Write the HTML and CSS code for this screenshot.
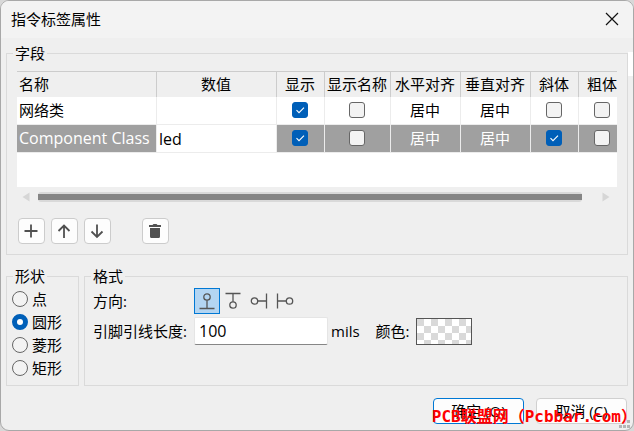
FILE: index.html
```html
<!DOCTYPE html>
<html lang="zh-CN">
<head>
  <meta charset="UTF-8" />
  <meta name="viewport" content="width=device-width, initial-scale=1" />
  <title>指令标签属性</title>
  <link rel="stylesheet" href="styles.css">
</head>
<body>

<div class="dialog">
  <header class="titlebar">
    <h1>指令标签属性</h1>
    <button class="close" aria-label="关闭">
      <svg width="14" height="14" viewBox="0 0 14 14"><path d="M1 1l12 12M13 1L1 13" stroke="#111" stroke-width="1.2" fill="none"/></svg>
    </button>
  </header>

  <main class="content">
    <fieldset class="fields">
      <legend>字段</legend>
      <div class="grid-view">
        <table>
          <colgroup>
            <col class="c-name"><col class="c-value"><col class="c-check"><col class="c-show">
            <col class="c-align"><col class="c-align"><col class="c-check"><col class="c-check">
          </colgroup>
          <thead>
            <tr>
              <th class="left">名称</th><th>数值</th><th>显示</th><th>显示名称</th>
              <th>水平对齐</th><th>垂直对齐</th><th>斜体</th><th>粗体</th>
            </tr>
          </thead>
          <tbody>
            <tr>
              <td class="left">网络类</td>
              <td></td>
              <td><input type="checkbox" aria-label="显示" checked></td>
              <td><input type="checkbox" aria-label="显示名称"></td>
              <td>居中</td>
              <td>居中</td>
              <td><input type="checkbox" aria-label="斜体"></td>
              <td><input type="checkbox" aria-label="粗体"></td>
            </tr>
            <tr class="selected">
              <td class="left latin">Component Class</td>
              <td class="edit"><input type="text" class="cell-input" aria-label="数值" value="led"></td>
              <td><input type="checkbox" aria-label="显示" checked></td>
              <td><input type="checkbox" aria-label="显示名称"></td>
              <td>居中</td>
              <td>居中</td>
              <td><input type="checkbox" aria-label="斜体" checked></td>
              <td><input type="checkbox" aria-label="粗体"></td>
            </tr>
          </tbody>
        </table>
      </div>
      <div class="scrollbar">
        <svg width="8" height="10" viewBox="0 0 8 10"><path d="M7.5 .5v9L.5 5z" fill="#d6d6d6"/></svg>
        <div class="track"><div class="thumb"></div></div>
        <svg width="8" height="10" viewBox="0 0 8 10"><path d="M.5 .5v9l7-4.5z" fill="#d6d6d6"/></svg>
      </div>
      <div class="tools">
        <button class="tool" aria-label="添加">
          <svg width="15" height="15" viewBox="0 0 15 15"><path d="M7 0.5v13M0.5 7h13" stroke="#505050" stroke-width="1.8" fill="none"/></svg>
        </button>
        <button class="tool" aria-label="上移">
          <svg width="15" height="15" viewBox="0 0 15 15"><path d="M7 14V1.500M1.500 7L7 1.500l5.500 5.500" stroke="#505050" stroke-width="1.8" fill="none"/></svg>
        </button>
        <button class="tool" aria-label="下移">
          <svg width="15" height="15" viewBox="0 0 15 15"><path d="M7 0.500V13M1.500 7.500L7 13l5.500-5.500" stroke="#505050" stroke-width="1.8" fill="none"/></svg>
        </button>
        <button class="tool delete" aria-label="删除">
          <svg width="15" height="15" viewBox="0 0 15 15"><path d="M1 1h3.500l1-1h3l1 1H13v2H1zM2 4h10v8.500a1.500 1.500 0 0 1-1.500 1.500h-7A1.500 1.500 0 0 1 2 12.500z" fill="#505050"/></svg>
        </button>
      </div>
    </fieldset>

    <div class="lower">
      <fieldset class="shapes">
        <legend>形状</legend>
        <label><input type="radio" name="shape">点</label>
        <label><input type="radio" name="shape" checked>圆形</label>
        <label><input type="radio" name="shape">菱形</label>
        <label><input type="radio" name="shape">矩形</label>
      </fieldset>

      <fieldset class="format">
        <legend>格式</legend>
        <div class="row">
          <span class="caption">方向:</span>
          <div class="directions">
            <button class="dir" aria-label="向上" aria-pressed="true">
              <svg width="18" height="18" viewBox="0 0 18 18"><circle cx="9" cy="5" r="3.2"/><path d="M9 8.2V16.5M1.5 16.5h15"/></svg>
            </button>
            <button class="dir" aria-label="向下" aria-pressed="false">
              <svg width="18" height="18" viewBox="0 0 18 18"><circle cx="9" cy="13" r="3.2"/><path d="M9 9.8V1.5M1.5 1.5h15"/></svg>
            </button>
            <button class="dir" aria-label="向左" aria-pressed="false">
              <svg width="18" height="18" viewBox="0 0 18 18"><circle cx="4.5" cy="9" r="3.2"/><path d="M7.7 9H16.5M16.5 1.5v15"/></svg>
            </button>
            <button class="dir" aria-label="向右" aria-pressed="false">
              <svg width="18" height="18" viewBox="0 0 18 18"><circle cx="13.5" cy="9" r="3.2"/><path d="M10.3 9H1.5M1.5 1.5v15"/></svg>
            </button>
          </div>
        </div>
        <div class="row">
          <label class="caption" for="pinLength">引脚引线长度:</label>
          <input type="text" class="length" id="pinLength" value="100">
          <span class="unit">mils</span>
          <label for="color">颜色:</label>
          <button class="swatch" id="color" aria-label="颜色"></button>
        </div>
      </fieldset>
    </div>
  </main>

  <footer class="actions">
    <button class="action primary">确定 (O)</button>
    <button class="action">取消 (C)</button>
  </footer>

  <div class="edge"></div>
  <svg class="grip" width="12" height="8" viewBox="0 0 12 8" fill="#b4b4b4"><path d="M8 0h3v3H8zM0 5h3v3H0zM4 5h3v3H4zM8 5h3v3H8z"/></svg>
  <div class="watermark">PCB联盟网（Pcbbar.com）</div>
</div>

</body>
</html>
```
FILE: styles.css
```css
:root {
  --bg: #efefef; --line: #dadada; --accent: #005fb8;
  --focus: #0078d4; --selected: #a0a0a0;
}
* { box-sizing: border-box; }
body {
  margin: 0; background: #d8d8d8; color: #000;
  font: 15px/20px "Open Sans", "Noto Sans CJK SC", sans-serif;
}
button, input { font: inherit; color: inherit; margin: 0; }
button { padding: 0; }
svg { display: block; }

.dialog {
  position: relative; display: flex; flex-direction: column;
  min-height: 100vh; overflow: hidden;
  background: var(--bg); border: 1px solid #a8a8a8; border-radius: 9px;
}
.titlebar {
  display: flex; align-items: center; justify-content: space-between;
  height: 37px; padding: 0 14px 2px 10px; background: #f3f3f3;
}
h1 { margin: 0; font-size: 15px; font-weight: normal; }
.close { border: none; background: none; }

.content { padding: 5px 5px 0; }
fieldset { margin: 0; padding: 0 10px; border: 1px solid var(--line); min-width: 0; }
legend { padding: 0 2px; margin-left: -4px; height: 20px; }

/* field table */
.fields { padding-top: 8px; padding-bottom: 10px; }
.grid-view { height: 116px; overflow: hidden; background: #fff; }
table { width: 610px; table-layout: fixed; border-collapse: separate; border-spacing: 0; }
.c-name { width: 140px; }
.c-value { width: 120px; }
.c-check { width: 48px; }
.c-show { width: 66px; }
.c-align { width: 70px; }
th, td { padding: 0 1px 2px 0; text-align: center; font-weight: normal; white-space: nowrap; }
th {
  height: 26px; background: var(--bg);
  border-top: 1px solid #ccc; border-right: 1px solid #ccc;
}
td { height: 28px; border-right: 1px solid #ececec; border-bottom: 1px solid #ececec; }
.left { text-align: left; padding-left: 2px; }
.selected td { background: var(--selected); color: #fff; }
.selected .edit { padding: 0; background: #fff; color: #000; }
.latin, .cell-input, .length { font-size: 16px; }
.cell-input { display: block; width: 100%; height: 27px; border: none; padding: 0 2px; background: none; }

input[type="checkbox"] {
  appearance: none; display: block; width: 16px; height: 16px; margin: 0 auto;
  background: #f3f3f3; border: 1px solid #666; border-radius: 3px;
}
input[type="checkbox"]:checked {
  border-color: var(--accent);
  background: var(--accent) url("data:image/svg+xml,%3Csvg xmlns='http://www.w3.org/2000/svg' viewBox='0 0 14 14'%3E%3Cpath d='M3.5 7.2l2.5 2.5 5-5' fill='none' stroke='white' stroke-width='1.1'/%3E%3C/svg%3E") center / 14px no-repeat;
}

.scrollbar { display: flex; align-items: center; gap: 8px; height: 19px; padding: 0 7px 0 5px; }
.track { flex: 1; height: 10px; padding: 2px 0; margin-right: 12px; border-radius: 3px; background: #d9d9d9; }
.thumb { height: 6px; background: #858585; }

.tools { display: flex; gap: 6px; margin-top: 12px; padding-left: 1px; }
.tool {
  display: flex; align-items: center; justify-content: center;
  width: 27px; height: 26px; background: #fdfdfd;
  border: 1px solid #ccc; border-radius: 4px;
}
.delete { margin-left: 25px; }

/* shape and format */
.lower { display: flex; gap: 5px; margin-top: 11px; }
.shapes { width: 73px; padding: 1px 5px 6px; }
.shapes legend { margin-left: 1px; }
.shapes label { display: flex; align-items: center; gap: 4px; height: 23px; }
input[type="radio"] {
  appearance: none; width: 16px; height: 16px;
  background: #f3f3f3; border: 1px solid #666; border-radius: 50%;
}
input[type="radio"]:checked { background: #fff; border: 5px solid var(--accent); }

.format { flex: 1; padding: 2px 8px; }
.format legend { margin-left: -2px; }
.row { display: flex; align-items: center; }
.row + .row { margin-top: 3px; }
.caption { width: 101px; white-space: nowrap; }
.directions { display: flex; }
.dir {
  display: flex; align-items: center; justify-content: center;
  width: 26px; height: 26px; border: 1px solid transparent; background: none;
}
.dir svg { fill: none; stroke: #555; stroke-width: 1.3; }
.dir[aria-pressed="true"] { background: #b3d5f2; border-color: var(--focus); }
.length {
  width: 134px; height: 28px; padding: 0 4px; background: #fff;
  border: 1px solid #e5e5e5; border-bottom-color: #868686; border-radius: 2px;
}
.unit { margin: 0 16px 0 3px; }
.swatch {
  width: 56px; height: 27px; margin-left: 6px; border: 1px solid #555;
  background: repeating-conic-gradient(#fff 0 25%, #d9d9d9 0 50%) 0 0 / 14px 14px;
}

.actions { display: flex; justify-content: flex-end; gap: 12px; padding: 12px 6px 6px; margin-top: auto; }
.action { width: 91px; height: 26px; background: #fdfdfd; border: 1px solid #d0d0d0; border-radius: 4px; }
.primary { border-color: var(--focus); }

/* overlays */
.edge { position: absolute; top: 51px; right: 0; width: 5px; height: 24px; background: #fff; }
.grip { position: absolute; right: 2px; bottom: 2px; }
.watermark {
  position: absolute; right: -4px; bottom: 3px;
  color: #f00; font: bold 16px/20px "DejaVu Sans Mono", "Noto Sans CJK SC", monospace;
  white-space: nowrap; pointer-events: none;
}
```
